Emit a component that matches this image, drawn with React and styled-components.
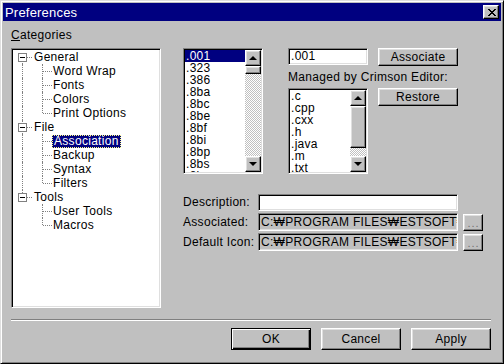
import React from "react";
import styled, { createGlobalStyle, css } from "styled-components";

const GlobalStyle = createGlobalStyle`
  html, body {
    margin: 0;
    padding: 0;
    background: #c0c0c0;
  }
  body {
    font-family: "Liberation Sans", Arial, "DejaVu Sans", sans-serif;
    font-size: 12px;
    letter-spacing: 0.3px;
    color: #000;
  }
  * { box-sizing: border-box; }
`;

const raised = css`
  border: 1px solid;
  border-color: #fff #000 #000 #fff;
  box-shadow: inset -1px -1px 0 #808080, inset 1px 1px 0 #dfdfdf;
`;

const sunken = css`
  border: 1px solid;
  border-color: #808080 #fff #fff #808080;
  box-shadow: inset 1px 1px 0 #000, inset -1px -1px 0 #dfdfdf;
`;

const Window = styled.div`
  width: 504px;
  height: 364px;
  background: #c0c0c0;
  border: 1px solid;
  border-color: #dfdfdf #000 #000 #dfdfdf;
  box-shadow: inset 1px 1px 0 #fff, inset -1px -1px 0 #808080;
  padding: 2px;
  display: flex;
  flex-direction: column;
`;

const TitleBar = styled.div`
  height: 18px;
  flex: none;
  background: #000080;
  color: #fff;
  font-size: 13px;
  letter-spacing: 0.2px;
  display: flex;
  align-items: center;
  justify-content: space-between;
  padding: 0 2px 0 2px;
`;

const CloseButton = styled.div`
  ${raised};
  width: 16px;
  height: 14px;
  background: #c0c0c0;
  display: flex;
  align-items: center;
  justify-content: center;
  padding-left: 1px;
`;

const Body = styled.div`
  flex: 1;
  display: flex;
  flex-direction: column;
  padding: 7px 10px 0 8px;
`;

const Main = styled.div`
  display: grid;
  grid-template-columns: 150px 1fr;
  grid-template-rows: 14px 260px;
  column-gap: 22px;
  row-gap: 6px;
`;

const GroupLabel = styled.div`
  line-height: 14px;
  grid-column: 1;
`;

const Tree = styled.div`
  ${sunken};
  grid-column: 1;
  grid-row: 2;
  background: #fff;
  padding: 1px;
`;

const TreeRow = styled.div`
  display: flex;
  align-items: center;
  height: 14px;
`;

const Guide = styled.span`
  position: relative;
  flex: none;
  width: 20px;
  height: 14px;

  &::before {
    content: "";
    display: ${(p) => (p.$v === "none" ? "none" : "block")};
    position: absolute;
    left: 9px;
    top: ${(p) => (p.$v === "bottom" ? "7px" : "0")};
    bottom: ${(p) => (p.$v === "top" ? "7px" : "0")};
    border-left: 1px dotted #808080;
  }

  &::after {
    content: "";
    display: ${(p) => (p.$h ? "block" : "none")};
    position: absolute;
    top: 7px;
    left: ${(p) => (p.$box ? "14px" : "10px")};
    width: ${(p) => (p.$box ? "5px" : "9px")};
    border-top: 1px dotted #808080;
  }
`;

const ExpandBox = styled.span`
  position: absolute;
  left: 5px;
  top: 3px;
  width: 9px;
  height: 9px;
  border: 1px solid #808080;
  background: #fff;
  z-index: 1;

  &::before {
    content: "";
    position: absolute;
    left: 1px;
    top: 3px;
    width: 5px;
    height: 1px;
    background: #000;
  }
`;

const NodeText = styled.span`
  line-height: 13px;
  height: 13px;
  white-space: nowrap;
  margin-left: ${(p) => (p.$root ? "1px" : "0")};
  ${(p) =>
    p.$selected &&
    css`
      background: #000080;
      color: #fff;
      outline: 1px dotted #ffff80;
      outline-offset: -1px;
      padding: 0 2px;
      margin-left: -1px;
    `}
`;

const RightPanel = styled.div`
  grid-column: 2;
  grid-row: 2;
  display: flex;
  flex-direction: column;
`;

const TopSection = styled.div`
  display: flex;
  gap: 25px;
  height: 126px;
`;

const ListBox = styled.div`
  ${sunken};
  background: #fff;
  width: ${(p) => p.$w}px;
  height: ${(p) => p.$h}px;
  padding: 1px;
  display: flex;
  flex: none;
`;

const Items = styled.div`
  flex: 1;
  overflow: hidden;
`;

const Item = styled.div`
  height: 12px;
  line-height: 12px;
  padding-left: 1px;
  white-space: nowrap;
  background: ${(p) => (p.$selected ? "#000080" : "transparent")};
  color: ${(p) => (p.$selected ? "#fff" : "#000")};
`;

const ScrollBar = styled.div`
  width: 16px;
  flex: none;
  display: flex;
  flex-direction: column;
`;

const ScrollButton = styled.div`
  ${raised};
  background: #c0c0c0;
  height: 16px;
  flex: none;
  display: flex;
  align-items: center;
  justify-content: center;

  &::before {
    content: "";
    width: 0;
    height: 0;
    border-left: 4px solid transparent;
    border-right: 4px solid transparent;
    ${(p) =>
      p.$down
        ? css`border-top: 4px solid #000;`
        : css`border-bottom: 4px solid #000;`}
  }
`;

const Thumb = styled.div`
  ${raised};
  background: #c0c0c0;
  height: ${(p) => p.$h}px;
  flex: none;
`;

const Track = styled.div`
  flex: 1;
  background: repeating-conic-gradient(#c0c0c0 0 25%, #fff 0 50%) 0 0 / 2px 2px;
`;

const SideGroup = styled.div`
  display: flex;
  flex-direction: column;
`;

const InlineRow = styled.div`
  display: flex;
  gap: 10px;
  align-items: flex-start;
`;

const Button = styled.div`
  ${raised};
  background: #c0c0c0;
  width: ${(p) => p.$w || 80}px;
  height: ${(p) => p.$h || 18}px;
  display: flex;
  align-items: center;
  justify-content: center;
  line-height: 14px;
  flex: none;
  ${(p) =>
    p.$default &&
    css`
      border: 1px solid #000;
      box-shadow: inset 1px 1px 0 #fff, inset -1px -1px 0 #000,
        inset -2px -2px 0 #808080;
    `}
`;

const Field = styled.div`
  ${sunken};
  background: ${(p) => (p.$disabled ? "#c0c0c0" : "#fff")};
  width: ${(p) => p.$w || 200}px;
  height: ${(p) => p.$h || 18}px;
  padding: 0 2px;
  line-height: ${(p) => (p.$h || 18) - 2}px;
  white-space: nowrap;
  overflow: hidden;
  flex: none;
`;

const SideLabel = styled.div`
  line-height: 14px;
  margin: 4px 0;
  white-space: nowrap;
`;

const Form = styled.div`
  margin-top: 19px;
  display: flex;
  flex-direction: column;
  gap: 2px;
`;

const FormRow = styled.div`
  display: grid;
  grid-template-columns: 70px 200px 20px;
  column-gap: 5px;
  align-items: center;
  height: 18px;
`;

const RowLabel = styled.span`
  white-space: nowrap;
`;

const Browse = styled.div`
  ${raised};
  background: #c0c0c0;
  height: 17px;
  display: flex;
  align-items: flex-end;
  justify-content: center;
  padding-bottom: 3px;
`;

const Dots = styled.span`
  color: #707070;
  font-size: 11px;
  line-height: 8px;
  letter-spacing: 1px;
  padding-left: 1px;
`;

const Separator = styled.div`
  margin-top: 11px;
  border-top: 1px solid #808080;
  border-bottom: 1px solid #fff;
`;

const ButtonRow = styled.div`
  margin-top: 7px;
  display: flex;
  justify-content: flex-end;
  gap: 10px;
`;

const CloseGlyph = () => {
  const rects = [];
  for (let i = 0; i < 7; i++) {
    rects.push(<rect key={`a${i}`} x={i} y={i} width="2" height="1" />);
    rects.push(<rect key={`b${i}`} x={6 - i} y={i} width="2" height="1" />);
  }
  return (
    <svg width="8" height="7" viewBox="0 0 8 7" fill="#000" shapeRendering="crispEdges">
      {rects}
    </svg>
  );
};

const tree = [
  { label: "General", children: ["Word Wrap", "Fonts", "Colors", "Print Options"] },
  { label: "File", children: ["Association", "Backup", "Syntax", "Filters"] },
  { label: "Tools", children: ["User Tools", "Macros"] },
];

const extensions = [".001", ".323", ".386", ".8ba", ".8bc", ".8be", ".8bf", ".8bi", ".8bp", ".8bs", ".8bx"];
const managed = [".c", ".cpp", ".cxx", ".h", ".java", ".m", ".txt"];

const CategoryTree = () => (
  <Tree>
    {tree.map((node, ni) => {
      const first = ni === 0;
      const last = ni === tree.length - 1;
      const rootV = first ? "bottom" : last ? "top" : "full";
      return (
        <React.Fragment key={node.label}>
          <TreeRow>
            <Guide $v={rootV} $h $box>
              <ExpandBox />
            </Guide>
            <NodeText $root>{node.label}</NodeText>
          </TreeRow>
          {node.children.map((child, ci) => (
            <TreeRow key={child}>
              <Guide $v={last ? "none" : "full"} />
              <Guide $v={ci === node.children.length - 1 ? "top" : "full"} $h />
              <NodeText $selected={child === "Association"}>{child}</NodeText>
            </TreeRow>
          ))}
        </React.Fragment>
      );
    })}
  </Tree>
);

const App = () => (
  <>
    <GlobalStyle />
    <Window>
      <TitleBar>
        <span>Preferences</span>
        <CloseButton>
          <CloseGlyph />
        </CloseButton>
      </TitleBar>
      <Body>
        <Main>
          <GroupLabel>
            <u>C</u>ategories
          </GroupLabel>
          <CategoryTree />
          <RightPanel>
            <TopSection>
              <ListBox $w={80} $h={126}>
                <Items>
                  {extensions.map((ext, i) => (
                    <Item key={ext} $selected={i === 0}>
                      {ext}
                    </Item>
                  ))}
                </Items>
                <ScrollBar>
                  <ScrollButton />
                  <Thumb $h={8} />
                  <Track />
                  <ScrollButton $down />
                </ScrollBar>
              </ListBox>
              <SideGroup>
                <InlineRow>
                  <Field $w={80} $h={17}>.001</Field>
                  <Button>Associate</Button>
                </InlineRow>
                <SideLabel>Managed by Crimson Editor:</SideLabel>
                <InlineRow>
                  <ListBox $w={80} $h={86}>
                    <Items>
                      {managed.map((ext) => (
                        <Item key={ext}>{ext}</Item>
                      ))}
                    </Items>
                    <ScrollBar>
                      <ScrollButton />
                      <Thumb $h={42} />
                      <Track />
                      <ScrollButton $down />
                    </ScrollBar>
                  </ListBox>
                  <Button>Restore</Button>
                </InlineRow>
              </SideGroup>
            </TopSection>
            <Form>
              <FormRow>
                <RowLabel>Description:</RowLabel>
                <Field $h={17} />
              </FormRow>
              <FormRow>
                <RowLabel>Associated:</RowLabel>
                <Field $disabled>C:₩PROGRAM FILES₩ESTSOFT₩ALZIP</Field>
                <Browse>
                  <Dots>...</Dots>
                </Browse>
              </FormRow>
              <FormRow>
                <RowLabel>Default Icon:</RowLabel>
                <Field $disabled>C:₩PROGRAM FILES₩ESTSOFT₩ALZIP</Field>
                <Browse>
                  <Dots>...</Dots>
                </Browse>
              </FormRow>
            </Form>
          </RightPanel>
        </Main>
        <Separator />
        <ButtonRow>
          <Button $w={80} $h={22} $default>OK</Button>
          <Button $w={80} $h={22}>Cancel</Button>
          <Button $w={80} $h={22}>Apply</Button>
        </ButtonRow>
      </Body>
    </Window>
  </>
);

export default App;
